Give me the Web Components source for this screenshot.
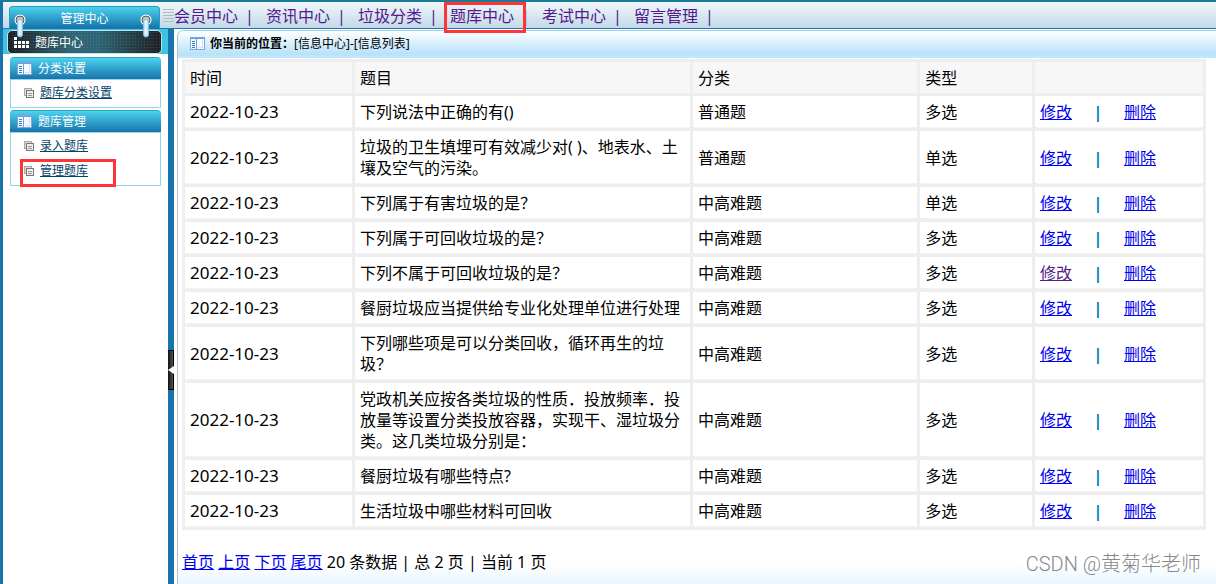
<!DOCTYPE html>
<html lang="zh-CN">
<head>
<meta charset="utf-8">
<title>题库中心</title>
<style>
  body {
    margin: 0;
    background: #fff;
    color: #000;
    font: 16px/21px "Noto Sans", "Noto Sans CJK SC", sans-serif;
  }
</style>
</head>
<body>
<admin-app></admin-app>

<script>
class PanelIcon extends HTMLElement {
  connectedCallback() {
    this.attachShadow({ mode: 'open' }).innerHTML = `
      <style>
        :host { display: block; flex: none; width: 15px; height: 13px; }
        svg { display: block; }
      </style>
      <svg width="15" height="13" shape-rendering="crispEdges" aria-hidden="true">
        <path fill="#f5faff" stroke="#7ba6dc" d="M.5 .5h14v12H.5z"/>
        <path fill="#6a9ee0" d="M1 1h13v1H1zM6 2h1v10H6z"/>
        <path fill="#3c78c4" d="M2 4h3v1H2zM2 6h3v1H2zM2 8h3v1H2zM2 10h3v1H2z"/>
        <path fill="#d5e4f5" d="M12 3h1v8h-5v-1h4z"/>
      </svg>
    `;
  }
}

class TopNav extends HTMLElement {
  connectedCallback() {
    const items = ['会员中心', '资讯中心', '垃圾分类', '题库中心', '考试中心', '留言管理'];

    const links = items.map(name => `
      <a href="#" ${name === '题库中心' ? 'class="marked"' : ''}>${name}</a><span class="sep">|</span>
    `).join('');

    this.attachShadow({ mode: 'open' }).innerHTML = `
      <style>
        *, *::after { box-sizing: border-box; }
        :host {
          display: flex;
          box-sizing: border-box;
          height: 29px;
          border-top: 2px solid #197b96;
          border-bottom: 1px solid #1b78ac;
          border-left: 3px solid #1873aa;
          background: linear-gradient(#f0f7fb, #c3d9e7);
        }
        .brand {
          flex: none;
          width: 151px;
          height: 22px;
          margin: 4px 3px 0 6px;
          border: 1px solid #2a9db8;
          border-bottom: 0;
          border-radius: 4px 4px 0 0;
          background: linear-gradient(#4ad1ed, #1873ab);
          color: #fff;
          font-size: 12px;
          line-height: 24px;
          text-align: center;
        }
        .grip {
          flex: none;
          width: 11px;
          height: 14px;
          margin-top: 7px;
          background: repeating-linear-gradient(#b3bcc2 0 1px, transparent 1px 3px);
        }
        nav { display: flex; height: 26px; line-height: 28px; white-space: nowrap; }
        a { position: relative; color: #551a8b; text-decoration: none; }
        .sep { width: 28px; padding-left: 7px; color: #551a8b; }
        .marked::after {
          content: "";
          position: absolute;
          z-index: 2;
          left: -6px;
          top: 0;
          width: 82px;
          height: 31px;
          border: 3px solid #fd3536;
        }
      </style>
      <div class="brand">管理中心</div>
      <div class="grip"></div>
      <nav>${links}</nav>
    `;
  }
}

class MenuGroup extends HTMLElement {
  connectedCallback() {
    this.attachShadow({ mode: 'open' }).innerHTML = `
      <style>
        :host { display: block; margin-bottom: 2px; }
        h2 {
          display: flex;
          align-items: center;
          gap: 6px;
          box-sizing: border-box;
          height: 22px;
          margin: 0;
          padding-left: 7px;
          border-top: 1px solid #2ba6bd;
          border-radius: 4px 4px 0 0;
          background: linear-gradient(#4bd3ef, #1873ab);
          color: #fff;
          font-size: 12px;
          font-weight: 400;
        }
        .body {
          padding: 0 0 2px 13px;
          border: 1px solid #91d7e7;
        }
      </style>
      <h2><panel-icon></panel-icon>${this.getAttribute('label')}</h2>
      <div class="body"><slot></slot></div>
    `;
  }
}

class MenuLink extends HTMLElement {
  connectedCallback() {
    this.attachShadow({ mode: 'open' }).innerHTML = `
      <style>
        :host { display: flex; align-items: center; gap: 6px; position: relative; height: 25px; font-size: 12px; }
        a { color: #064367; text-decoration: underline; }
        svg { flex: none; }
        :host([marked])::after {
          content: "";
          position: absolute;
          left: -4px;
          top: 1px;
          box-sizing: border-box;
          width: 96px;
          height: 28px;
          border: 3px solid #fd3536;
        }
      </style>
      <svg width="10" height="10" shape-rendering="crispEdges" aria-hidden="true">
        <path fill="#d8d8d8" stroke="#aaa" d="M.5 .5h7v7h-7z"/>
        <path fill="#eee" stroke="#777" d="M2.5 2.5h7v7h-7z"/>
        <path fill="#999" d="M4 5h4v1H4zM4 7h4v1H4z"/>
      </svg>
      <a href="#"><slot></slot></a>
    `;
  }
}

class SideMenu extends HTMLElement {
  connectedCallback() {
    // ring that hooks the section bar to the brand bar
    const ring = side => `
      <svg class="ring ${side}" width="12" height="24" aria-hidden="true">
        <circle cx="6" cy="6" r="5.500" fill="#fff"/>
        <circle cx="6" cy="6" r="4" fill="#c4c4c4" stroke="#555"/>
        <rect x="3.500" y="5" width="5" height="18" rx="2.500" fill="#c2e5fa" stroke="#86bfe2"/>
        <path stroke="#fff" d="M6 7v14"/>
      </svg>`;

    this.attachShadow({ mode: 'open' }).innerHTML = `
      <style>
        :host {
          display: block;
          box-sizing: border-box;
          width: 168px;
          border-left: 3px solid #1873aa;
          background: #fff;
        }
        .current {
          position: relative;
          padding: 1px 6px 0 4px;
          background: #40c3e3;
        }
        h1 {
          display: flex;
          align-items: center;
          gap: 6px;
          box-sizing: border-box;
          height: 24px;
          margin: 0;
          padding-left: 6px;
          border: 1px solid #b9e7f2;
          border-radius: 5px;
          background:
            radial-gradient(#ffffff22 20%, transparent 40%) 0 0 / 3px 3px,
            linear-gradient(90deg, #1e2022, #2e6474 40%, #2e6474 60%, #1e2022);
          color: #fff;
          font-size: 12px;
          font-weight: 400;
        }
        .ring { position: absolute; top: -15px; z-index: 1; }
        .left { left: 11px; }
        .right { right: 16px; }
        .groups { padding: 3px 7px 0; }
      </style>
      <div class="current">
        ${ring('left')}${ring('right')}
        <h1>
          <svg width="15" height="11" fill="#fff" shape-rendering="crispEdges" aria-hidden="true">
            <path d="M0 0h3v3H0zM0 4h3v3H0zM4 4h3v3H4zM8 4h3v3H8zM12 4h3v3h-3zM0 8h3v3H0zM4 8h3v3H4zM8 8h3v3H8zM12 8h3v3h-3z"/>
          </svg>
          题库中心
        </h1>
      </div>
      <div class="groups">
        <menu-group label="分类设置">
          <menu-link>题库分类设置</menu-link>
        </menu-group>
        <menu-group label="题库管理">
          <menu-link>录入题库</menu-link>
          <menu-link marked>管理题库</menu-link>
        </menu-group>
      </div>
    `;
  }
}

class SideSplitter extends HTMLElement {
  connectedCallback() {
    this.attachShadow({ mode: 'open' }).innerHTML = `
      <style>
        :host {
          display: flex;
          align-items: center;
          width: 6px;
          padding-top: 126px;
          box-sizing: border-box;
          background: #1873aa;
        }
        button {
          width: 6px;
          height: 40px;
          padding: 0;
          border: 1px solid #000;
          border-left: 0;
          background: linear-gradient(90deg, #111, #555);
        }
        svg { display: block; }
      </style>
      <button aria-label="收起菜单">
        <svg width="6" height="8"><path fill="#fff" d="M0 4l6-4v8z"/></svg>
      </button>
    `;
  }
}

class QuestionTable extends HTMLElement {
  connectedCallback() {
    const rows = [
      ['下列说法中正确的有()', '普通题', '多选'],
      ['垃圾的卫生填埋可有效减少对( )、地表水、土壤及空气的污染。', '普通题', '单选'],
      ['下列属于有害垃圾的是？', '中高难题', '单选'],
      ['下列属于可回收垃圾的是？', '中高难题', '多选'],
      ['下列不属于可回收垃圾的是？', '中高难题', '多选', 'visited'],
      ['餐厨垃圾应当提供给专业化处理单位进行处理', '中高难题', '多选'],
      ['下列哪些项是可以分类回收，循环再生的垃圾？', '中高难题', '多选'],
      ['党政机关应按各类垃圾的性质．投放频率．投放量等设置分类投放容器，实现干、湿垃圾分类。这几类垃圾分别是：', '中高难题', '多选'],
      ['餐厨垃圾有哪些特点?', '中高难题', '多选'],
      ['生活垃圾中哪些材料可回收', '中高难题', '多选']
    ];

    const body = rows.map(([title, category, type, state = '']) => `
      <tr>
        <td class="date">2022-10-23</td>
        <td>${title}</td>
        <td>${category}</td>
        <td>${type}</td>
        <td><div class="actions"><a href="#" class="${state}">修改</a><span>|</span><a href="#">删除</a></div></td>
      </tr>
    `).join('');

    this.attachShadow({ mode: 'open' }).innerHTML = `
      <style>
        :host { display: block; }
        table {
          width: 100%;
          table-layout: fixed;
          border-collapse: separate;
          border-spacing: 3px;
          background: #eee;
        }
        th, td { padding: 6px 5px 4px; text-align: left; font-weight: 400; }
        th { background: #f7f7f7; }
        td { background: #fff; border-bottom: 1px dotted #eaeaea; }
        .date { padding: 5px; font-size: 17px; }
        .actions { display: flex; }
        .actions span { width: 52px; text-align: center; color: #067fb5; font-weight: 700; }
        a { color: #00e; }
        .visited { color: #551a8b; }
      </style>
      <table>
        <colgroup>
          <col style="width: 16.6%"><col style="width: 33.3%"><col style="width: 22.3%"><col style="width: 11.1%"><col>
        </colgroup>
        <thead>
          <tr><th>时间</th><th>题目</th><th>分类</th><th>类型</th><th></th></tr>
        </thead>
        <tbody>${body}</tbody>
      </table>
    `;
  }
}

class PageLinks extends HTMLElement {
  connectedCallback() {
    this.attachShadow({ mode: 'open' }).innerHTML = `
      <style>
        :host { display: block; }
        a { color: #00e; }
      </style>
      <a href="#">首页</a> <a href="#">上页</a> <a href="#">下页</a> <a href="#">尾页</a>
      20 条数据 | 总 2 页 | 当前 1 页
    `;
  }
}

class ContentPanel extends HTMLElement {
  connectedCallback() {
    this.attachShadow({ mode: 'open' }).innerHTML = `
      <style>
        :host {
          display: block;
          flex: 1;
          min-width: 0;
          margin: 1px 0 0 3px;
          border-left: 1px solid #bcbcc4;
          border-radius: 6px 0 0 0;
          background: linear-gradient(#fff, #e9f6fe) bottom / 100% 20px no-repeat;
        }
        .location {
          display: flex;
          align-items: center;
          box-sizing: border-box;
          height: 28px;
          padding: 0 0 2px 12px;
          border-top: 1px solid #a5cfeb;
          border-radius: 6px 0 0 0;
          background: linear-gradient(#fff, #b8e2fa 85%, #c5e8fc);
          font-size: 12px;
        }
        panel-icon { margin-right: 5px; }
        .content { padding: 1px 10px 11px 4px; }
        page-links { margin-top: 22px; }
      </style>
      <div class="location">
        <panel-icon></panel-icon>
        <b>你当前的位置：</b>[信息中心]-[信息列表]
      </div>
      <div class="content">
        <question-table></question-table>
        <page-links></page-links>
      </div>
    `;
  }
}

class AdminApp extends HTMLElement {
  connectedCallback() {
    this.attachShadow({ mode: 'open' }).innerHTML = `
      <style>
        :host { display: flex; flex-direction: column; position: relative; min-height: 100vh; }
        main { display: flex; flex: 1; }
        .credit {
          position: absolute;
          right: 15px;
          bottom: 8px;
          color: #888;
          font-family: Roboto, "Noto Sans CJK SC", sans-serif;
          font-size: 20px;
          font-weight: 300;
          line-height: 24px;
        }
      </style>
      <top-nav></top-nav>
      <main>
        <side-menu></side-menu>
        <side-splitter></side-splitter>
        <content-panel></content-panel>
      </main>
      <div class="credit">CSDN @黄菊华老师</div>
    `;
  }
}

customElements.define('panel-icon', PanelIcon);
customElements.define('top-nav', TopNav);
customElements.define('menu-group', MenuGroup);
customElements.define('menu-link', MenuLink);
customElements.define('side-menu', SideMenu);
customElements.define('side-splitter', SideSplitter);
customElements.define('question-table', QuestionTable);
customElements.define('page-links', PageLinks);
customElements.define('content-panel', ContentPanel);
customElements.define('admin-app', AdminApp);
</script>
</body>
</html>
